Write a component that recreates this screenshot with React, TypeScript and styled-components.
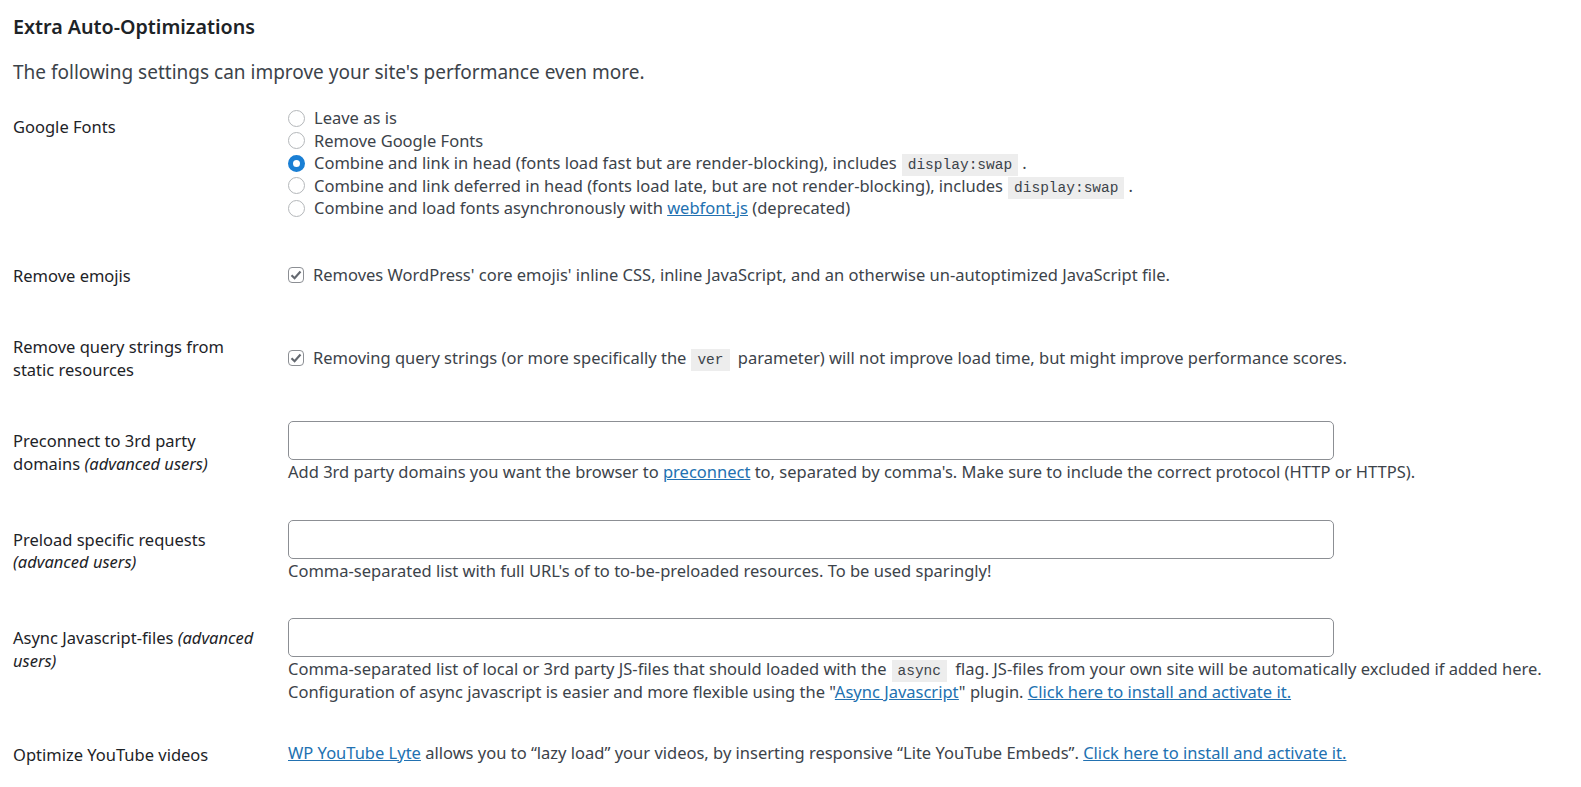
import styled, { createGlobalStyle } from 'styled-components';

const GlobalStyle = createGlobalStyle`
  body {
    margin: 0;
    background: #ffffff;
    font-family: "Noto Sans", "Open Sans", sans-serif;
    font-size: 16.5px;
    line-height: 22.5px;
    color: #3c434a;
  }
`;

const Page = styled.div`
  padding: 0 13px 40px;
`;

const Heading = styled.h2`
  margin: 15px 0 0;
  font-size: 19.7px;
  line-height: 24px;
  font-weight: 600;
  color: #1d2327;
`;

const Intro = styled.p`
  margin: 20px 0 6px;
  font-size: 19px;
  line-height: 26px;
`;

const Row = styled.div`
  display: grid;
  grid-template-columns: 275px 1fr;
`;

const Label = styled.div`
  width: 250px;
  padding: 25px 0 24px;
  color: #1d2327;
`;

const Field = styled.div<{ $tight?: boolean }>`
  display: flex;
  flex-direction: column;
  justify-content: center;
  padding: ${(p) => (p.$tight ? '16px 0 16px' : '16px 0 20px')};
`;

const Option = styled.label`
  display: flex;
  align-items: center;
  gap: 9px;
  white-space: nowrap;
  height: 22.5px;
`;

const Radio = styled.span<{ $checked?: boolean }>`
  flex: none;
  box-sizing: border-box;
  width: 17px;
  height: 17px;
  border-radius: 50%;
  border: ${(p) => (p.$checked ? '5.5px solid #1a7fd4' : '1.5px solid #b4b7ba')};
  background: #fff;
`;

const Checkbox = styled.span`
  flex: none;
  box-sizing: border-box;
  width: 16px;
  height: 16px;
  border-radius: 4px;
  border: 1px solid #8c8f94;
  display: flex;
  align-items: center;
  justify-content: center;
`;

const Code = styled.code`
  font-family: "Liberation Mono", "DejaVu Sans Mono", monospace;
  font-size: 14.5px;
  line-height: 16px;
  background: #ededed;
  padding: 3px 6px 3px;
  margin: 0 4px 0 5px;
`;

const Link = styled.a`
  color: #2271b1;
  text-decoration: underline;
`;

const TextInput = styled.input`
  box-sizing: border-box;
  width: 1046px;
  height: 39px;
  margin: 0 0 1px;
  border: 1px solid #8c8f94;
  border-radius: 5px;
  background: #fff;
  font: inherit;
`;

const Description = styled.p`
  margin: 0;
`;

const Em = styled.i`
  font-style: italic;
`;

const Check = () => (
  <Checkbox>
    <svg width="12" height="10" viewBox="0 0 12 10">
      <path d="M1.5 5.2 L4.6 8.2 L10.5 1.6" fill="none" stroke="#646970" strokeWidth="2.2" />
    </svg>
  </Checkbox>
);

const fontOptions = ['Leave as is', 'Remove Google Fonts'];

export default function App() {
  return (
    <Page>
      <GlobalStyle />
      <Heading>Extra Auto-Optimizations</Heading>
      <Intro>The following settings can improve your site's performance even more.</Intro>

      <Row>
        <Label>Google Fonts</Label>
        <Field>
          {fontOptions.map((o) => (
            <Option key={o}>
              <Radio />
              {o}
            </Option>
          ))}
          <Option>
            <Radio $checked />
            <span>
              Combine and link in head (fonts load fast but are render-blocking), includes
              <Code>display:swap</Code>.
            </span>
          </Option>
          <Option>
            <Radio />
            <span>
              Combine and link deferred in head (fonts load late, but are not render-blocking), includes
              <Code>display:swap</Code>.
            </span>
          </Option>
          <Option>
            <Radio />
            <span>
              Combine and load fonts asynchronously with <Link href="#">webfont.js</Link> (deprecated)
            </span>
          </Option>
        </Field>
      </Row>

      <Row>
        <Label>Remove emojis</Label>
        <Field $tight>
          <Option>
            <Check />
            Removes WordPress' core emojis' inline CSS, inline JavaScript, and an otherwise un-autoptimized JavaScript file.
          </Option>
        </Field>
      </Row>

      <Row>
        <Label>Remove query strings from static resources</Label>
        <Field $tight>
          <Option>
            <Check />
            <span>
              Removing query strings (or more specifically the<Code>ver</Code> parameter) will not improve load time, but might improve performance scores.
            </span>
          </Option>
        </Field>
      </Row>

      <Row>
        <Label>
          Preconnect to 3rd party domains <Em>(advanced users)</Em>
        </Label>
        <Field>
          <TextInput type="text" />
          <Description>
            Add 3rd party domains you want the browser to <Link href="#">preconnect</Link> to, separated by comma's. Make sure to include the correct protocol (HTTP or HTTPS).
          </Description>
        </Field>
      </Row>

      <Row>
        <Label>
          Preload specific requests <Em>(advanced users)</Em>
        </Label>
        <Field>
          <TextInput type="text" />
          <Description>
            Comma-separated list with full URL's of to to-be-preloaded resources. To be used sparingly!
          </Description>
        </Field>
      </Row>

      <Row>
        <Label>
          Async Javascript-files <Em>(advanced users)</Em>
        </Label>
        <Field $tight>
          <TextInput type="text" />
          <Description>
            Comma-separated list of local or 3rd party JS-files that should loaded with the<Code>async</Code> flag. JS-files from your own site will be automatically excluded if added here.
            <br />
            Configuration of async javascript is easier and more flexible using the "<Link href="#">Async Javascript</Link>" plugin. <Link href="#">Click here to install and activate it.</Link>
          </Description>
        </Field>
      </Row>

      <Row>
        <Label>Optimize YouTube videos</Label>
        <Field>
          <Description>
            <Link href="#">WP YouTube Lyte</Link> allows you to “lazy load” your videos, by inserting responsive “Lite YouTube Embeds”. <Link href="#">Click here to install and activate it.</Link>
          </Description>
        </Field>
      </Row>
    </Page>
  );
}
